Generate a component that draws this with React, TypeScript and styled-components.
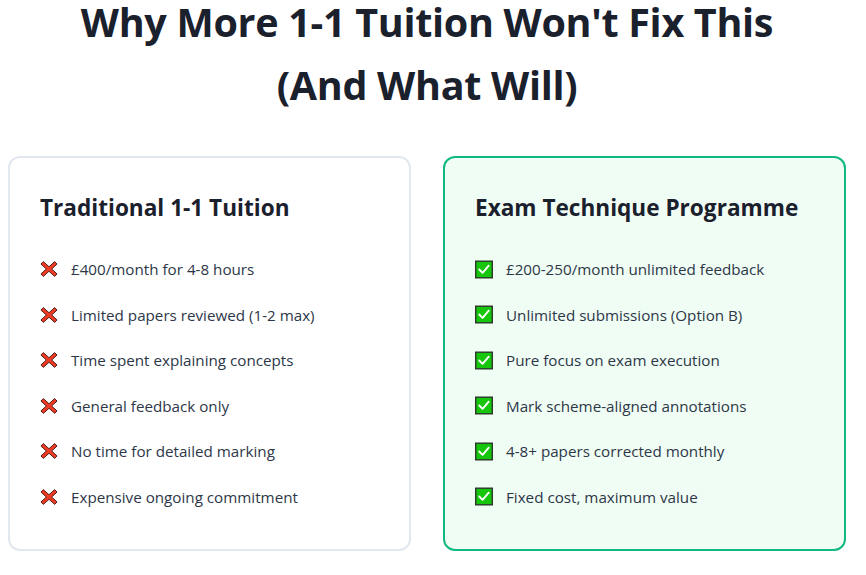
import React from "react";
import styled, { createGlobalStyle } from "styled-components";

const Global = createGlobalStyle`
  html, body { margin: 0; padding: 0; background: #ffffff; }
  body { font-family: "Open Sans", "Noto Sans", sans-serif; color: #1a202c; }
  * { box-sizing: border-box; }
`;

const Page = styled.div`
  width: 866px;
  padding: 0 20px 0 8px;
`;

const Title = styled.h1`
  margin: 0;
  display: flex;
  flex-direction: column;
  align-items: center;
  gap: 19px;
  text-align: center;
  font-size: 39.5px;
  line-height: 44px;
  font-weight: 700;
  color: #1a202c;
  letter-spacing: -0.3px;
`;

const TitleLine = styled.span`
  display: block;
`;

const Grid = styled.div`
  margin-top: 49px;
  display: grid;
  grid-template-columns: 1fr 1fr;
  gap: 32px;
`;

const Card = styled.div<{ $highlight?: boolean }>`
  border: 2px solid ${(p) => (p.$highlight ? "#10b981" : "#e2e8f0")};
  background: ${(p) => (p.$highlight ? "#f0fdf4" : "#ffffff")};
  border-radius: 12px;
  padding: 35px 30px 34px;
  height: 395px;
`;

const CardTitle = styled.h3`
  margin: 0 0 35px;
  font-size: 22.6px;
  line-height: 30px;
  font-weight: 700;
  color: #1a202c;
`;

const List = styled.ul`
  list-style: none;
  margin: 0;
  padding: 0;
  display: flex;
  flex-direction: column;
  gap: 23.6px;
`;

const Item = styled.li`
  display: flex;
  align-items: center;
  gap: 13px;
  font-size: 15.2px;
  line-height: 22px;
  color: #2d3748;
`;

const IconBox = styled.span`
  width: 18px;
  height: 20px;
  display: inline-flex;
  align-items: center;
  justify-content: center;
  flex: none;
`;

const Cross = () => (
  <IconBox>
    <svg width="19" height="18" viewBox="0 0 19 18">
      <path
        d="M3.5 1.2 L9.5 6.6 L15.5 1.2 L18 3.8 L12.3 9 L18 14.2 L15.5 16.8 L9.5 11.4 L3.5 16.8 L1 14.2 L6.7 9 L1 3.8 Z"
        fill="#ee3a24"
        stroke="#4a1c12"
        strokeWidth="1"
        strokeLinejoin="round"
      />
    </svg>
  </IconBox>
);

const Check = () => (
  <IconBox>
    <svg width="19" height="19" viewBox="0 0 19 19">
      <rect x="0.75" y="0.75" width="17.5" height="17.5" fill="#16c60c" stroke="#2b3a2b" strokeWidth="1.5" />
      <path d="M4.5 9.5 L8 13 L14.5 5.5" fill="none" stroke="#ffffff" strokeWidth="2" strokeLinecap="round" strokeLinejoin="round" />
    </svg>
  </IconBox>
);

const bad = [
  "£400/month for 4-8 hours",
  "Limited papers reviewed (1-2 max)",
  "Time spent explaining concepts",
  "General feedback only",
  "No time for detailed marking",
  "Expensive ongoing commitment",
];

const good = [
  "£200-250/month unlimited feedback",
  "Unlimited submissions (Option B)",
  "Pure focus on exam execution",
  "Mark scheme-aligned annotations",
  "4-8+ papers corrected monthly",
  "Fixed cost, maximum value",
];

export default function App() {
  return (
    <>
      <Global />
      <Page>
        <Title>
          <TitleLine>Why More 1-1 Tuition Won't Fix This</TitleLine>
          <TitleLine>(And What Will)</TitleLine>
        </Title>
        <Grid>
          <Card>
            <CardTitle>Traditional 1-1 Tuition</CardTitle>
            <List>
              {bad.map((t) => (
                <Item key={t}>
                  <Cross />
                  {t}
                </Item>
              ))}
            </List>
          </Card>
          <Card $highlight>
            <CardTitle>Exam Technique Programme</CardTitle>
            <List>
              {good.map((t) => (
                <Item key={t}>
                  <Check />
                  {t}
                </Item>
              ))}
            </List>
          </Card>
        </Grid>
      </Page>
    </>
  );
}
